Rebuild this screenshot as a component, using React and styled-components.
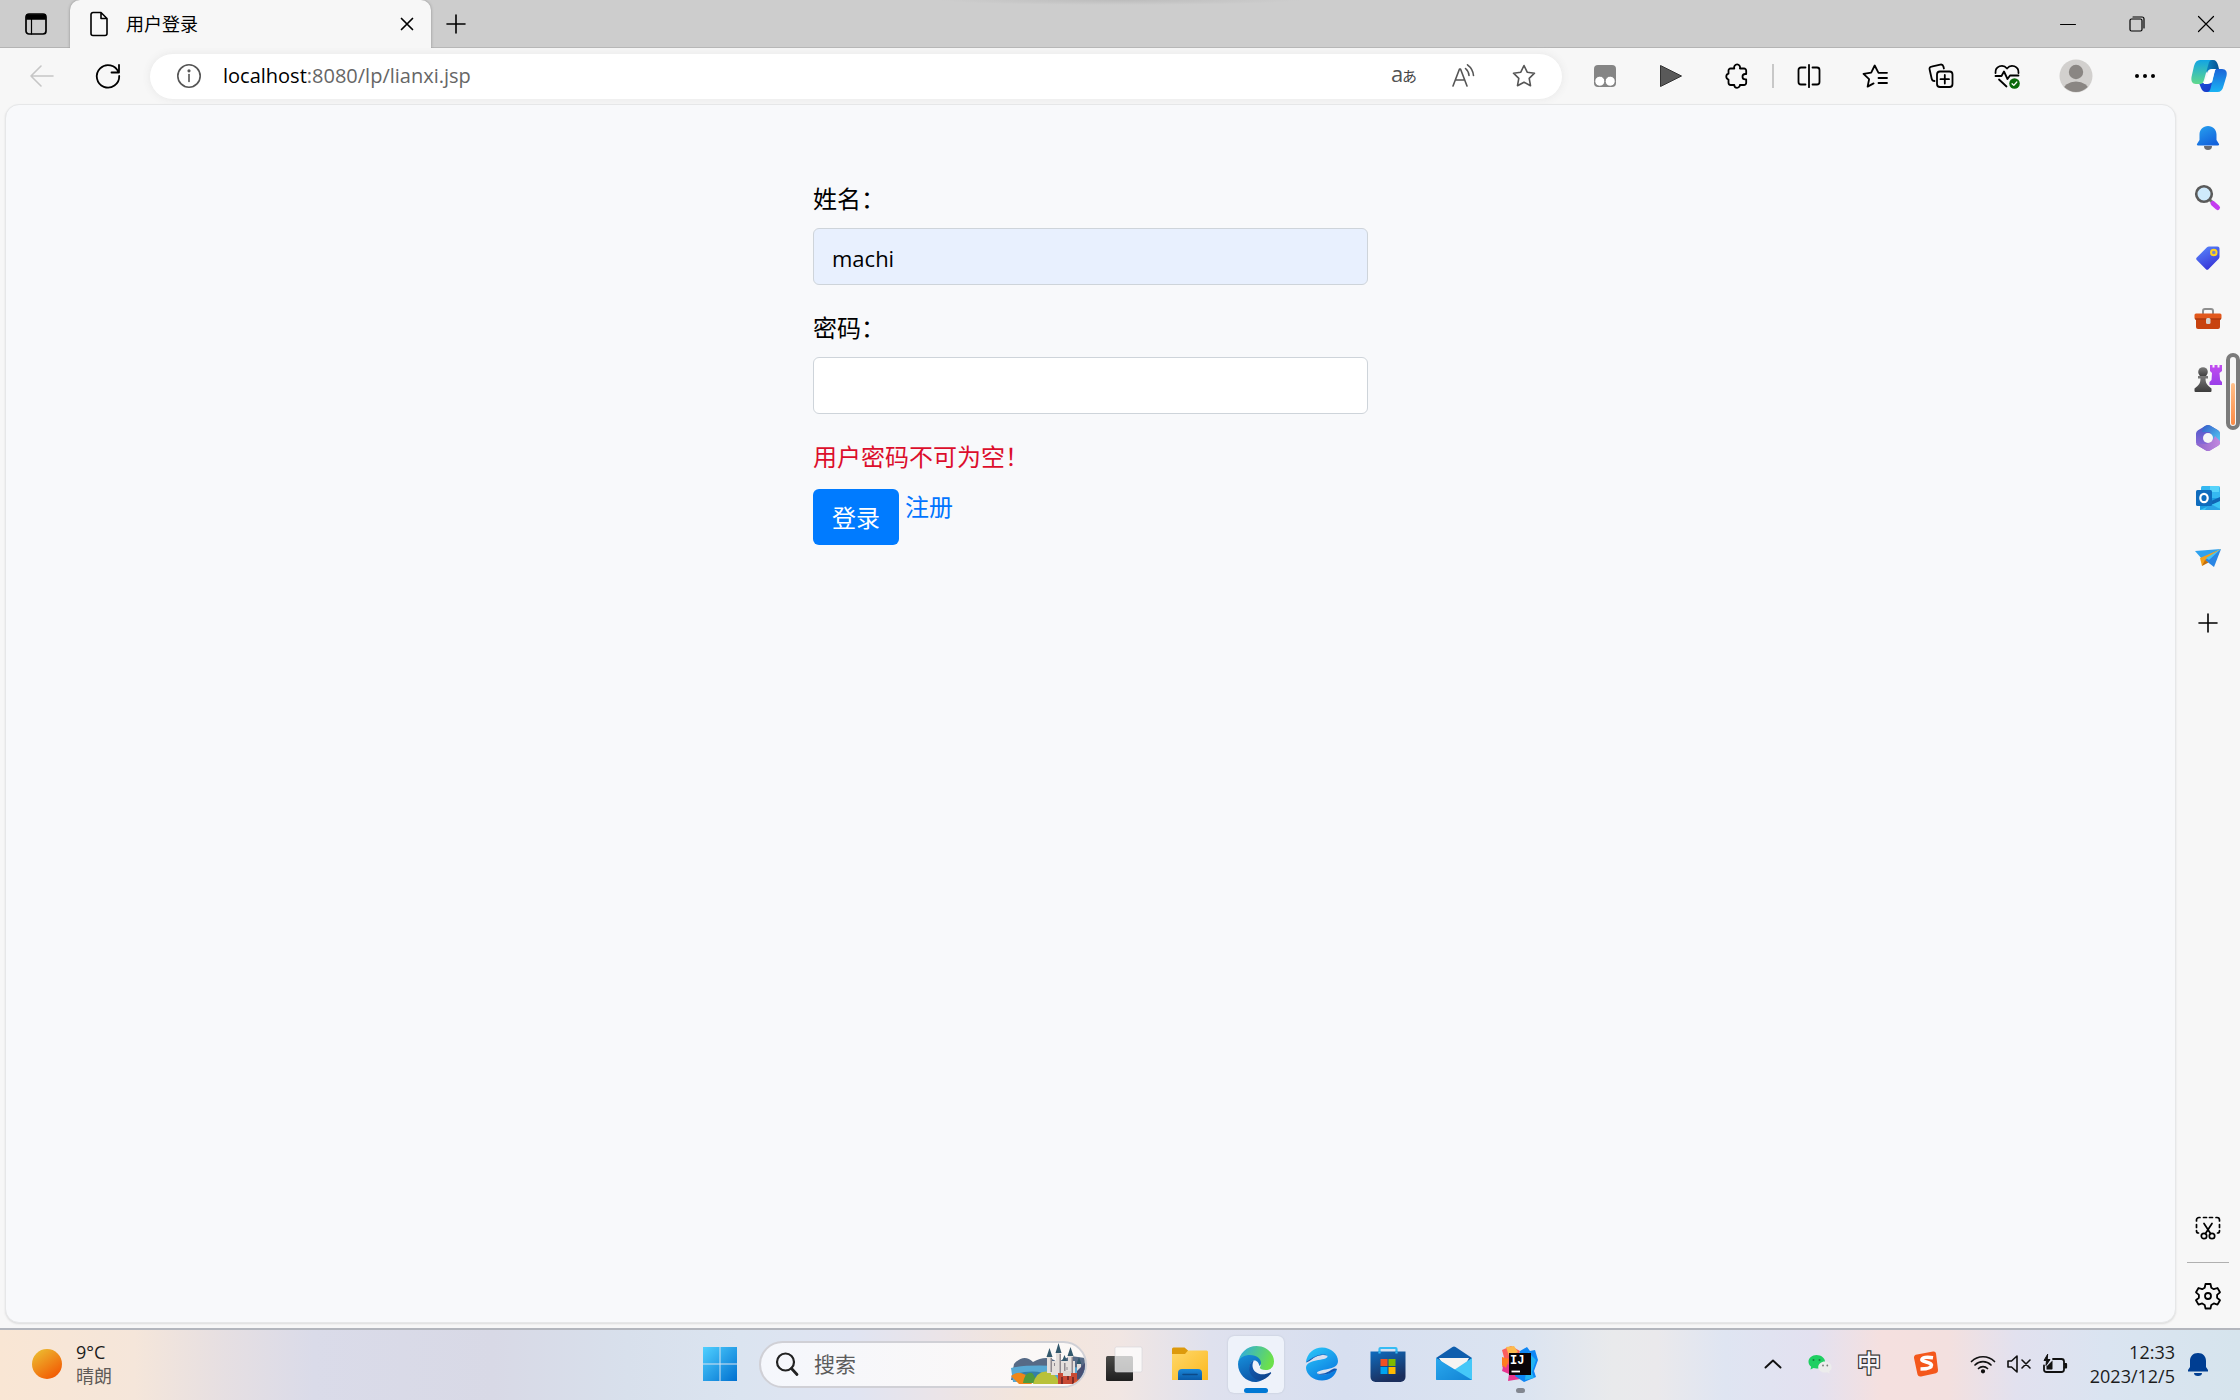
import React from 'react';
import styled, { createGlobalStyle, css } from 'styled-components';

const GlobalStyle = createGlobalStyle`
  *, *::before, *::after { box-sizing: border-box; }
  body {
    margin: 0;
    background: #f7f7f7;
    color: #000;
    font-family: "Open Sans", "Noto Sans CJK SC", sans-serif;
  }
  button, input { font: inherit; color: inherit; }
`;

const Desktop = styled.div`
  min-height: 100vh;
  display: flex;
  flex-direction: column;
`;

const iconButton = css`
  display: flex;
  align-items: center;
  justify-content: center;
  flex: none;
  padding: 0;
  border: 0;
  background: none;
`;

/* ---------- title bar ---------- */

const TitleBar = styled.header`
  display: flex;
  height: 48px;
  background: radial-gradient(ellipse 180px 5px at 50% 0, #bcbcbc, #cdcdcd);
  box-shadow: inset 0 -1px 0 #b4b4b4;
`;

const TabActions = styled.button`
  ${iconButton}
  width: 70px;
  padding-left: 2px;
`;

const Tab = styled.div`
  display: flex;
  align-items: center;
  width: 361px;
  height: 48px;
  padding: 0 11px 0 19px;
  gap: 17px;
  border-radius: 10px 10px 0 0;
  background: #f7f7f7;
  box-shadow: 0 0 3px #8d8d8d;
  clip-path: inset(0 -4px 0 -4px);
`;

const TabTitle = styled.span`
  flex: 1;
  font-size: 18px;
  line-height: 24px;
`;

const SmallButton = styled.button`
  ${iconButton}
  width: 26px;
  height: 26px;
`;

const NewTab = styled.button`
  ${iconButton}
  width: 50px;
`;

const WindowControls = styled.div`
  display: flex;
  margin-left: auto;
`;

const WindowButton = styled.button`
  ${iconButton}
  width: 69px;
`;

/* ---------- toolbar ---------- */

const Toolbar = styled.nav`
  display: flex;
  align-items: center;
  height: 56px;
  padding-left: 9px;
`;

const ToolButton = styled.button`
  ${iconButton}
  width: ${(p) => p.$width || 66}px;
  height: 48px;
`;

const AddressBar = styled.div`
  display: flex;
  align-items: center;
  flex: 1;
  height: 45px;
  margin: 0 10px 0 9px;
  padding: 0 8px 0 26px;
  border-radius: 23px;
  background: #fff;
  box-shadow: 0 0 8px #e6e6e6;
`;

const Url = styled.div`
  flex: 1;
  margin-left: 21px;
  font-size: 20px;
  line-height: 28px;
  color: #666;
  b { font-weight: 400; color: #000; }
`;

const ToolDivider = styled.span`
  width: 2px;
  height: 24px;
  margin: 0 2px;
  background: #c8c8c8;
`;

/* ---------- page and side bar ---------- */

const Body = styled.div`
  display: flex;
  flex: 1;
`;

const Page = styled.main`
  flex: 1;
  margin: 0 0 5px 5px;
  padding-top: 76px;
  border: 1px solid #e6e7e8;
  border-radius: 14px;
  background: #f8f9fb;
  box-shadow: 0 1px 2px #dcdcdc;
`;

const LoginForm = styled.form`
  width: 555px;
  margin: 0 auto;
  font-size: 24px;
  line-height: 36px;
`;

const Field = styled.div`
  display: flex;
  flex-direction: column;
  gap: 11px;
  margin-bottom: 25px;
`;

const TextInput = styled.input`
  width: 100%;
  height: 57px;
  padding: 2px 18px 0;
  border: 1px solid #ced4da;
  border-radius: 6px;
  background: ${(p) => (p.$filled ? '#e8f0fe' : '#fff')};
  font-size: 22px;
  outline: 0;
`;

const ErrorText = styled.p`
  margin: 0 0 14px;
  color: #dc0e2c;
`;

const Actions = styled.div`
  display: flex;
  align-items: flex-start;
  gap: 6px;
`;

const SubmitButton = styled.button`
  height: 56px;
  padding: 2px 19px 0;
  border: 0;
  border-radius: 6px;
  background: #007bff;
  color: #fff;
`;

const RegisterLink = styled.a`
  color: #0074ff;
  text-decoration: none;
`;

const SideBar = styled.aside`
  position: relative;
  display: flex;
  flex-direction: column;
  align-items: center;
  width: 64px;
  padding: 4px 0 2px;
`;

const SideButton = styled.button`
  ${iconButton}
  width: 60px;
  height: 60px;
`;

const SideSpacer = styled.span`
  flex: ${(p) => (p.$size ? 'none' : 1)};
  height: ${(p) => p.$size || 0}px;
`;

const SideDivider = styled.hr`
  width: 42px;
  height: 1px;
  margin: 4px 0 3px;
  border: 0;
  background: #b0b0b0;
`;

const Meter = styled.div`
  position: absolute;
  right: 0;
  top: 249px;
  display: flex;
  align-items: flex-end;
  width: 14px;
  height: 77px;
  padding: 1px;
  border: 4px solid #7b7b7b;
  border-radius: 7px;
  background: #f7f7f7;
`;

const MeterFill = styled.span`
  width: 100%;
  height: 42px;
  border-radius: 2px;
  background: linear-gradient(#ffc08a, #fb8a45);
`;

/* ---------- task bar ---------- */

const TaskBar = styled.footer`
  display: grid;
  grid-template-columns: 1fr auto 1fr;
  height: 72px;
  padding-bottom: 2px;
  border-top: 2px solid #b3b6bd;
  background: linear-gradient(90deg,
    #f9e6d4 0%, #f5e6da 6%, #e6dfe2 10%, #dadbe9 14%, #d8d9e6 22%, #d8e0ec 28%, #dbe4f0 33%, #e0e4f2 38%,
    #ebe4e8 42%, #f4e5da 46%, #f1e6e3 50%, #dfe1ee 54%, #d7dff0 60%, #dbe4f1 68%, #e9eaec 72%, #eae9ec 74%,
    #dfe5f2 77%, #e3e1f0 81%, #f5e0df 84%, #f3e0df 87%, #e2e1ef 90%, #dae4f1 94%, #d6e4ed 100%);
`;

const Weather = styled.div`
  display: flex;
  align-items: center;
  gap: 14px;
  padding-left: 32px;
`;

const WeatherText = styled.div`
  font-size: 18px;
  line-height: 24px;
  color: #1c1c1c;
  span { display: block; color: #5f5b57; }
`;

const Apps = styled.div`
  display: flex;
  align-items: center;
`;

const AppButton = styled.button`
  ${iconButton}
  position: relative;
  width: 66px;
  height: 68px;
`;

const ActiveTile = styled.span`
  display: flex;
  align-items: center;
  justify-content: center;
  width: 56px;
  height: 57px;
  border-radius: 6px;
  background: #eef2fa;
  box-shadow: 0 0 2px #b9c0cf;
`;

const Indicator = styled.span`
  position: absolute;
  bottom: 5px;
  width: ${(p) => (p.$active ? 24 : 9)}px;
  height: 5px;
  border-radius: 3px;
  background: ${(p) => (p.$active ? '#0078d4' : '#828790')};
`;

const SearchBox = styled.label`
  display: flex;
  align-items: center;
  width: 328px;
  height: 47px;
  margin: 0 4px 0 6px;
  padding-left: 14px;
  gap: 15px;
  overflow: hidden;
  border: 2px solid #d0d0d6;
  border-radius: 24px;
  background: linear-gradient(90deg, #f5f7fc, #fcf8f6);
`;

const SearchInput = styled.input`
  flex: 1;
  min-width: 0;
  padding: 0;
  border: 0;
  outline: 0;
  background: none;
  font-size: 21px;
  &::placeholder { color: #5c5c5c; opacity: 1; }
`;

const Tray = styled.div`
  display: flex;
  align-items: center;
  justify-content: flex-end;
  padding-right: 20px;
`;

const TrayButton = styled.button`
  ${iconButton}
  width: ${(p) => p.$width}px;
  height: 48px;
`;

const Clock = styled.time`
  margin: 0 0 0 10px;
  width: 92px;
  font-size: 18px;
  line-height: 24px;
  text-align: right;
  color: #1c1c1c;
  span { display: block; }
`;

/* ---------- drawings ---------- */

const Drawing = styled.svg`
  flex: none;
  overflow: visible;
`;

const Glyph = ({ w = 24, h = w, color = '#000', sw = 1.6, children }) => (
  <Drawing width={w} height={h} viewBox={`0 0 ${w} ${h}`} fill="none" stroke={color} strokeWidth={sw}
    strokeLinecap="round" strokeLinejoin="round" aria-hidden="true">{children}</Drawing>
);
const Art = ({ w = 24, h = w, children }) => (
  <Drawing width={w} height={h} viewBox={`0 0 ${w} ${h}`} aria-hidden="true">{children}</Drawing>
);
const Grad = ({ id, from, to, x2 = 1, y2 = 1 }) => (
  <linearGradient id={id} x1="0" y1="0" x2={x2} y2={y2}>
    <stop offset="0" stopColor={from} /><stop offset="1" stopColor={to} />
  </linearGradient>
);

const STAR = 'M12 1.500l3.200 6.700 7.300 1-5.300 5.100 1.300 7.400-6.500-3.500-6.500 3.500 1.300-7.400L1.500 9.200l7.300-1z';

const TabActionsIcon = () => (
  <Glyph w={22} sw={1.7}>
    <rect x="1" y="1" width="20" height="20" rx="3" />
    <path d="M2 2h18v4H2z" fill="#000" /><path d="M6.500 6v15" strokeWidth="1.200" />
  </Glyph>
);
const FileIcon = () => (
  <Glyph w={20} h={26}><path d="M4 1.500h8l6 6v15a2 2 0 0 1-2 2H4a2 2 0 0 1-2-2v-19a2 2 0 0 1 2-2zM12 2v5.500h6" /></Glyph>
);
const BackIcon = () => <Glyph color="#c6c6c6"><path d="M23 12H1M11 2L1 12l10 10" /></Glyph>;
const RefreshIcon = () => (
  <Glyph w={26} sw={1.8}><path d="M23.500 9.500A11.200 11.200 0 1 0 24.200 13M24 2v7.500h-7.500" /></Glyph>
);
const InfoIcon = () => (
  <Glyph w={26} color="#555"><circle cx="13" cy="13" r="11.200" /><path d="M13 11.500v7" />
    <circle cx="13" cy="7.800" r=".8" fill="#555" /></Glyph>
);
const TranslateIcon = () => (
  <Art w={28} h={28}>
    <text x="1" y="20" fontSize="22" fill="#555">a</text>
    <text x="12" y="20" fontSize="15" fill="#444" fontFamily="Noto Sans CJK JP, sans-serif">あ</text>
  </Art>
);
const ReadAloudIcon = () => (
  <Glyph w={26} color="#555">
    <path d="M2 23L8.500 6h1L16 23M4.500 17h9M14.500 5.500a10 10 0 0 1 3.500 7M16.500 1.800a15 15 0 0 1 6 10.700" />
  </Glyph>
);
const StarIcon = () => <Glyph color="#555"><path d={STAR} /></Glyph>;
const MonkeyIcon = () => (
  <Art w={24}><rect x="1" y="1" width="22" height="22" rx="4" fill="#858585" />
    <circle cx="6.800" cy="17.200" r="5" fill="#fff" stroke="#777" strokeWidth=".8" />
    <circle cx="17.200" cy="17.200" r="5" fill="#fff" stroke="#777" strokeWidth=".8" /></Art>
);
const PlayIcon = () => (
  <Art w={24}><path d="M1.500 1.500v21l21-10.500z" fill="#595959" stroke="#333" strokeWidth="1" /></Art>
);
const PuzzleIcon = () => (
  <Glyph sw={1.8}>
    <path d="M5.500 4.500H9.300a3 3 0 1 1 5.600 0H19a2.200 2.200 0 0 1 2.200 2.200V10h-1a2.700 2.700 0 0 0 0 5.400h1v3.400A2.200 2.200 0 0 1 19 21h-4.100a2.800 2.800 0 1 1-5.600 0H5.700a2.200 2.200 0 0 1-2.200-2.200v-3.300a3 3 0 0 1 0-5.800V6.500a2 2 0 0 1 2-2z" />
  </Glyph>
);
const SplitIcon = () => (
  <Glyph sw={1.8}><path d="M8.500 3.500H4A2.500 2.500 0 0 0 1.500 6v12A2.500 2.500 0 0 0 4 20.500h4.500M15.500 3.500H20A2.500 2.500 0 0 1 22.500 6v12a2.500 2.500 0 0 1-2.500 2.500h-4.500M12 .8v22.400" /></Glyph>
);
const FavoritesIcon = () => (
  <Glyph w={26} h={24} sw={1.8}>
    <path d="M25 8.800h-8.500L12.700 1.500 9.200 8.700l-7.700 1.200 5.600 5.300-1.500 7.400 6-3.200M16.500 14H25M16.500 19H25" />
  </Glyph>
);
const CollectionsIcon = () => (
  <Glyph w={26} sw={1.8}>
    <path d="M6.500 18c-1.500 0-2.500-1-2.800-2.300L1.600 6.500C1.200 5 2 3.900 3.500 3.600l8.800-2c1.600-.3 2.700.4 3.100 1.900l.5 2" />
    <rect x="9" y="8.500" width="15.500" height="15.500" rx="3" /><path d="M16.800 12v8.500M12.500 16.200H21" />
  </Glyph>
);
const HealthIcon = () => (
  <Glyph w={26} sw={1.8}>
    <path d="M1.500 10C1 3 9 .5 13 5.500 17 .5 25 3 24.500 10M1.500 13h6l2.500-4.500 3.500 7.500 2.500-3.500h8.500M5 16.500l7.500 7" />
    <circle cx="20.500" cy="20.500" r="5.300" fill="#0b6a0b" stroke="none" />
    <path d="M18.100 20.700l1.700 1.700 3-3.400" stroke="#fff" strokeWidth="1.300" />
  </Glyph>
);
const Avatar = () => (
  <Art w={34}>
    <clipPath id="avatarClip"><circle cx="17" cy="17" r="16" /></clipPath>
    <circle cx="17" cy="17" r="16.500" fill="#d2d0ce" />
    <circle cx="17" cy="13" r="7.200" fill="#8a8683" />
    <ellipse cx="17" cy="32" rx="13" ry="9.500" fill="#8a8683" clipPath="url(#avatarClip)" />
  </Art>
);
const DotsIcon = () => (
  <Art w={22} h={6}>{[3, 11, 19].map((x) => <circle key={x} cx={x} cy="3" r="2" />)}</Art>
);
const CopilotIcon = () => (
  <Art w={38} h={34}>
    <defs>
      <Grad id="cp1" from="#12a4e4" to="#61d98c" x2={0} /><Grad id="cp2" from="#1b64d8" to="#1ab4f4" x2={0} />
      <Grad id="cp3" from="#0f9fe0" to="#06508f" x2={1} y2={0} /><Grad id="cp4" from="#1f4fd8" to="#1436c4" />
    </defs>
    <path d="M10 1h13c3 0 4 2 5 5l1 4h-7c-3 0-4 1-5 4z" fill="url(#cp3)" />
    <path d="M9 24h8l10-1-2 6c-1 3-2 4-5 4h-4c-3 0-4-2-5-4z" fill="url(#cp4)" />
    <path d="M10 1h12c-2 0-3 2-3.500 4L14 21c-1 3-2 4-4 4H6c-4 0-5-3-4.500-7L4 7c1-4 3-6 6-6z" fill="url(#cp1)" />
    <path d="M26 10h6c4 0 5.500 3 4.500 7l-3 10c-1 4-3 6-6 6H17c2 0 3-1.500 3.500-3.500l4-16c.6-2.200 1-3.500 1.500-3.500z" fill="url(#cp2)" />
    <path d="M19.500 11.500c1-1 2-1.500 4-1.500h2.500c-1 .5-1.300 1.500-1.600 3l-2.400 9.500c-1 1.500-2 2.500-4.500 2.500H14c-1 0 0-1 .5-2z" fill="#fff" />
  </Art>
);

const BellArt = () => (
  <Art w={24} h={26}>
    <Grad id="bell" from="#27a3f0" to="#1463dc" x2={0.6} />
    <path d="M8 21h8a4 4 0 0 1-8 0z" fill="#6b6b70" />
    <path d="M12 1c-5 0-8.500 4-8.500 8.500V15L1 19c-.3.700 0 1.500 1 1.500h20c1 0 1.300-.8 1-1.500l-2.500-4V9.500C20.500 5 17 1 12 1z" fill="url(#bell)" />
  </Art>
);
const SearchArt = () => (
  <Art w={28} h={28}>
    <path d="M16 16l4 4" stroke="#777" strokeWidth="3" />
    <path d="M19 19.500l4.500 4" stroke="#c43cf0" strokeWidth="5" strokeLinecap="round" />
    <circle cx="10" cy="10" r="7.800" fill="#cfeafc" stroke="#5a5a5a" strokeWidth="2.600" />
  </Art>
);
const TagArt = () => (
  <Art w={26}>
    <Grad id="tag" from="#5a8cff" to="#3937d8" x2={0.5} />
    <path d="M14 1.500h8.500a2 2 0 0 1 2 2V12a3 3 0 0 1-1 2L13.700 24a2 2 0 0 1-3 0L2 15.300a2 2 0 0 1 0-3L12 2.300a3 3 0 0 1 2-.8z" fill="url(#tag)" />
    <circle cx="18.800" cy="7.500" r="2.800" fill="#7b86c8" stroke="#ffd21e" strokeWidth="2" />
  </Art>
);
const ToolboxArt = () => (
  <Art w={28} h={24}>
    <path d="M9 8V5a2 2 0 0 1 2-2h6a2 2 0 0 1 2 2v3" fill="none" stroke="#8f8f8f" strokeWidth="2" />
    <rect x="2" y="11" width="24" height="12" rx="2" fill="#c8430f" />
    <path d="M2 7.500h24a1.500 1.500 0 0 1 1.500 1.500v3c0 1-1 1.500-2 1.500h-23c-1 0-2-.5-2-1.500V9A1.500 1.500 0 0 1 2 7.500z" fill="#e2581c" />
    <path d="M1 13h26" stroke="#8f2a0a" strokeWidth="1" /><rect x="12" y="12" width="4.500" height="6" rx="1.500" fill="#d8d4d0" />
  </Art>
);
const ChessArt = () => (
  <Art w={28} h={28}>
    <Grad id="pawn" from="#7a7a7a" to="#3c3c3c" x2={0} /><Grad id="rook" from="#c24cf0" to="#9a3fe8" x2={0} />
    <path d="M16 1h2.500v2.500h2V1h3v2.500h2V1H28v6l-2.500 2 .6 7 1.900 2v3H15.500v-3l2-2 .5-7-2-2z" fill="url(#rook)" />
    <circle cx="9" cy="8" r="4.800" fill="url(#pawn)" />
    <path d="M4 12h10v2.500h-2.500c0 4 1 5.500 3 7.500l3 2.500V27a1 1 0 0 1-1 1H1.500a1 1 0 0 1-1-1v-2.500l3-2.500c2-2 3-3.500 3-7.500H4z" fill="url(#pawn)" />
  </Art>
);
const M365Art = () => (
  <Art w={26} h={28}>
    <defs>
      <Grad id="m1" from="#4458c8" to="#a66fdc" x2={0} /><Grad id="m2" from="#3358c8" to="#55d4f6" x2={1} />
      <Grad id="m3" from="#8a63c8" to="#c58ae0" x2={1} y2={0} />
      <clipPath id="hexClip"><path d="M11 1.600a4 4 0 0 1 4 0l8 4.600a4 4 0 0 1 2 3.400v8.800a4 4 0 0 1-2 3.400l-8 4.600a4 4 0 0 1-4 0l-8-4.600a4 4 0 0 1-2-3.400V9.600a4 4 0 0 1 2-3.400z" /></clipPath>
    </defs>
    <g clipPath="url(#hexClip)">
      <path d="M0 0h26v28H0z" fill="url(#m1)" />
      <path d="M9 0h17v19l-8-4-3-7H7z" fill="url(#m2)" />
      <path d="M0 20h12l6-4 2-4 6 6v10H0z" fill="url(#m3)" />
    </g>
    <circle cx="13" cy="14" r="5" fill="#f7f7f7" />
  </Art>
);
const OutlookArt = () => (
  <Art w={26}>
    <rect x="6" y="1" width="19" height="13" rx="1.500" fill="#35b8f1" /><path d="M15 1h9v6h-9z" fill="#57d3fa" />
    <path d="M5 13h20v10a2 2 0 0 1-2 2H5z" fill="#1b9de2" /><path d="M25 12v12L14 17z" fill="#1066b5" />
    <path d="M5 25l20-9v7a2 2 0 0 1-2 2z" fill="#3cc5f5" /><path d="M14 18l11 6v1H10z" fill="#2aa4e6" />
    <rect x="1" y="5" width="16" height="16" rx="1.500" fill="#0f6cbd" />
    <ellipse cx="9" cy="13" rx="3.700" ry="4.200" fill="none" stroke="#fff" strokeWidth="2.200" />
  </Art>
);
const SendArt = () => (
  <Art w={28} h={22}>
    <path d="M27 2L1 4l7 8z" fill="#2fa2ee" /><path d="M27 2L6 11l2 8z" fill="#f5a11a" />
    <path d="M27 2l-7 18-9-7z" fill="#2a86e4" /><path d="M8 19l3-6 3.500 2.500z" fill="#c5700d" />
    <path d="M27 2L12 11l3 2z" fill="#46c3f2" />
  </Art>
);
const PlusIcon = () => <Glyph w={20} sw={1.6}><path d="M10 1v18M1 10h18" /></Glyph>;
const SnipIcon = () => (
  <Glyph w={26} h={24} sw={1.7}>
    <path d="M1.500 5V4a2.500 2.500 0 0 1 2.500-2.500h1M8.500 1.500h3M14.500 1.500h3M21 1.500h1A2.500 2.500 0 0 1 24.500 4v1M1.500 8.500v3M24.500 8.500v3M1.500 14.500V15A2 2 0 0 0 3.500 17M24.500 14.500V15a2 2 0 0 1-2 2M9 7.500l6.500 10M17 7.500l-6.500 10" />
    <circle cx="9" cy="20" r="2.700" /><circle cx="17" cy="20" r="2.700" />
  </Glyph>
);
const GearIcon = () => (
  <Glyph w={28} sw={1.8}>
    <circle cx="14" cy="14" r="3" />
    <path d="M11.500 2h5l.8 3.800 2.500 1.400 3.700-1.200 2.500 4.300-2.900 2.600v2.900l2.900 2.500-2.500 4.300-3.700-1.200-2.500 1.500-.8 3.600h-5l-.8-3.600-2.500-1.500-3.700 1.200L2 18.300l2.900-2.500v-2.900L2 10.300 4.500 6l3.700 1.200 2.500-1.400z" />
  </Glyph>
);

const StartArt = () => (
  <Art w={36}>
    <Grad id="win" from="#50d0ff" to="#0070d0" />
    <path d="M1 1h16.500v16.500H1zM18.500 1H35v16.500H18.500zM1 18.500h16.500V35H1zM18.500 18.500H35V35H18.500z" fill="url(#win)" />
  </Art>
);
const CastleArt = () => (
  <Art w={74} h={43}>
    <path d="M3 21q10-11 19-2 14-8 24 0l14-6 14 2v22H0z" fill="#566a86" />
    <path d="M0 25q20-5 74 0v14H2z" fill="#58a9d4" /><path d="M4 31q22-6 36 2l-4 7H8z" fill="#347fa8" />
    <path d="M0 33q10-8 18 3l3 5H8z" fill="#ef8618" /><path d="M12 40q2-12 9-10 3 3 5 10z" fill="#4f9a3c" />
    <path d="M22 41q4-15 17-12 9 5 9 12z" fill="#b9c13a" />
    <path d="M36 14h5v16h-5zM45 10h5v20h-5zM57 13h5v20h-5zM40 18h24v14H40zM66 21h4v13h-4z" fill="#e5dfdc" />
    <path d="M35.500 14l3-9 3 9zM44.500 10l3-10 3 10zM56.500 13l3-9 3 9zM65.500 21l2.500-7 2.500 7zM51 18l2.500-6 2.500 6z" fill="#33586c" />
    <path d="M39.500 15h1.500v14h-1.500zM48.500 11h1.500v19h-1.500zM60.500 14h1.500v18h-1.500zM43 20h1v3h-1zM53 20h1.500v10H53zM55.500 24h1v3h-1z" fill="#8f898f" />
    <path d="M47 30h19v11H47z" fill="#c94a34" /><path d="M50 34h2v7h-2zM56 32h2v5h-2zM61 34h2v7h-2z" fill="#7d2b25" />
    <path d="M52 28h8v5h-8z" fill="#ddd5d0" />
    <path d="M66 41V28l8-8v21z" fill="#485074" /><path d="M62 41q5-7 12-6v6z" fill="#e4672f" />
  </Art>
);
const TaskViewArt = () => (
  <Art w={36}>
    <Grad id="tv" from="#4a4a48" to="#1f1f1f" x2={0} />
    <rect x="0" y="10" width="27" height="25" rx="1.500" fill="url(#tv)" />
    <rect x="9" y="1" width="27" height="25" rx="1.500" fill="#fff" fillOpacity=".72" stroke="#d4d4d8" strokeWidth=".6" />
  </Art>
);
const FolderArt = () => (
  <Art w={36}>
    <Grad id="fold" from="#ffd869" to="#fbb820" /><Grad id="foldb" from="#1b87d8" to="#0a5aa8" x2={0} />
    <path d="M0 3a1.500 1.500 0 0 1 1.500-1.500h11L16 4.500V9H0z" fill="#dd9a0c" />
    <path d="M0 8h13l3-3.500h18.500A1.500 1.500 0 0 1 36 6v28H0z" fill="url(#fold)" />
    <path d="M6 34V27a4 4 0 0 1 4-4h16a4 4 0 0 1 4 4v7z" fill="url(#foldb)" />
    <path d="M11 28.500h14" stroke="#0c4a88" strokeWidth="1.600" strokeLinecap="round" />
  </Art>
);
const EdgeArt = () => (
  <Art w={36}>
    <defs>
      <Grad id="e1" from="#2aa6ee" to="#6be04c" x2={1} y2={0.3} /><Grad id="e2" from="#1790dc" to="#0c56a8" x2={0.4} />
      <Grad id="e3" from="#1160b8" to="#0e3f86" x2={1} />
    </defs>
    <path d="M0 18C1 7 9 0 18.500 0 28 0 36 7 36 15.500c0 6-4 8.500-8.500 8.500-4 0-6.200-1.500-5.500-3 2-3 0-9-7-10C8 10 1 13 0 18z" fill="url(#e1)" />
    <path d="M0 18C.5 11 7 9 12 9c7 0 11 4 11 8 0 2-1.500 3-1.500 3-1-5-4-6-6-5.500-4 1.500-5 8-2 12.500 3 5 9 6 14 4.500C24 35 20 36 17.500 36 8 36 0 28 0 18z" fill="url(#e2)" />
    <path d="M16 14.300C10 16 9 27 16 32c5 3.500 11 3 17-4.500.5-1-.3-1.500-1-1-8 4-17 1-17.500-6.500 0-3 .8-4.500 1.500-5.700z" fill="url(#e3)" />
  </Art>
);
const LegacyEdgeArt = () => (
  <Art w={34}>
    <Grad id="ie" from="#2ccafa" to="#0b7be0" x2={0.6} />
    <path d="M.8 15.500C2 6 9 .5 17 .5c9 0 16 6.500 16 13.500 0 5-4.500 7-10 8-6 1-11 2.200-11 4 0 2.500 9 3.500 20-4C30.500 29 24.500 33.500 17 33.500c-9 0-15.500-6-16-12.500 0-4.500 4.500-6.500 10-7.500 6-1 11.500-2 11.500-4C22.500 6.500 12 6.500.8 15.500z" fill="url(#ie)" />
    <path d="M.8 15.500C10 7 20 6 22.300 8.800 19 6.800 11 9 8 11.500 6 13 3 15.500.8 15.500zM32.300 22C25 28 14 29 12 26.500c4 1.500 11-1 14-3.500 2-1.500 4-2 6.300-1z" fill="#0f56b4" />
  </Art>
);
const StoreArt = () => (
  <Art w={36}>
    <Grad id="store" from="#0f6cbf" to="#1b2e5c" x2={0.4} />
    <path d="M9.500 9V3a1 1 0 0 1 1-1h15a1 1 0 0 1 1 1v6" fill="none" stroke="#35bcf4" strokeWidth="2.200" />
    <path d="M.5 5.500h35V31a5 5 0 0 1-5 5h-25a5 5 0 0 1-5-5z" fill="url(#store)" />
    <path d="M9.500 5.500V7.500M26.500 5.500V7.500" stroke="#35bcf4" strokeWidth="2.200" />
    <path d="M10.500 13h7v7h-7z" fill="#f25022" /><path d="M18.500 13h7v7h-7z" fill="#7fba00" />
    <path d="M10.500 21h7v7h-7z" fill="#00a4ef" /><path d="M18.500 21h7v7h-7z" fill="#ffb900" />
  </Art>
);
const MailArt = () => (
  <Art w={36}>
    <Grad id="mail" from="#2aa9ee" to="#1283d4" />
    <path d="M0 12L16.500 1a3 3 0 0 1 3 0L36 12v4H0z" fill="#0f5ead" /><path d="M3 12h30l-6 11H10z" fill="#f6f4f2" />
    <path d="M36 12v22H0V12l18 12z" fill="#45c8f8" /><path d="M0 12l36 22H1a1 1 0 0 1-1-1z" fill="url(#mail)" />
  </Art>
);
const IdeaArt = () => (
  <Art w={36}>
    <path d="M0 4l9-4 9 5-4 13-12 6L0 20l3-5z" fill="#fb5f5c" /><path d="M4 1l8-1 4 6-9 4z" fill="#fdb94d" />
    <path d="M2 17l8 3 8 13-12 2 1-7-7-3z" fill="#e8368f" /><path d="M0 11l7 2-3 9-4-3z" fill="#fe7d20" />
    <path d="M18 5l7-4 3 4 5-1 3 10-4 11 2 6-12 5-9-6z" fill="#0f87f5" /><path d="M26 6l8 8-4 12 2 6-9 2z" fill="#23b4f2" />
    <rect x="7" y="7" width="22" height="22" fill="#0a0408" />
    <text x="8" y="18" fontSize="12" fontWeight="700" fill="#fff" fontFamily="Liberation Mono, monospace">IJ</text>
    <path d="M9.500 25.500H18" stroke="#fff" strokeWidth="1.800" />
  </Art>
);
const WechatArt = () => (
  <Art w={24} h={20}>
    <path d="M8.500 1C4 1 .5 4 .5 7.700c0 2 1 3.700 2.600 5L2.500 15.500l3-1.400c1 .3 2 .4 3 .4 4.500 0 8.500-3 8.500-6.800S13 1 8.500 1z" fill="#1fcf62" />
    <path d="M17 7.500c-3.800 0-6.800 2.500-6.800 5.500s3 5.600 6.800 5.600c.8 0 1.500-.1 2.200-.3l2.500 1.200-.5-2.200c1.500-1 2.500-2.500 2.500-4.300 0-3-3-5.500-6.700-5.500z" fill="#ececec" />
    <circle cx="5.500" cy="6" r="1" fill="#14803c" /><circle cx="11.500" cy="6" r="1" fill="#14803c" />
    <circle cx="15" cy="11.500" r=".9" fill="#777" /><circle cx="19.300" cy="11.500" r=".9" fill="#777" />
  </Art>
);
const ImeArt = () => (
  <Art w={28}>
    <text x="14" y="22" fontSize="24" textAnchor="middle" fontWeight="500" fill="#f7f7fb" stroke="#333" strokeWidth="2.400"
      paintOrder="stroke" fontFamily="Noto Sans CJK SC, sans-serif">中</text>
  </Art>
);
const SogouArt = () => (
  <Art w={26}>
    <path d="M4 3.500l16-3a2.500 2.500 0 0 1 3 2L25 19a3 3 0 0 1-2 3.300L8 25.500a3 3 0 0 1-3.500-2L1 7a3 3 0 0 1 3-3.500z" fill="#f4581c" />
    <path d="M20 6.800c-4-.6-10-.8-11 1.500-1 2.700 9.500 2.500 9.500 5.700 0 3.500-7 4-11 4" fill="none" stroke="#fff" strokeWidth="3.600" />
  </Art>
);
const WifiIcon = () => (
  <Glyph w={26} h={20} color="#111" sw={1.7}>
    <path d="M1.500 7.500a16.300 16.300 0 0 1 23 0M5 11a11.300 11.300 0 0 1 16 0M8.500 14.500a6.300 6.300 0 0 1 9 0" />
    <circle cx="13" cy="17.300" r="1.300" fill="#111" />
  </Glyph>
);
const MuteIcon = () => (
  <Glyph w={26} h={20} color="#111"><path d="M2 7v6h3.500l5.500 5V2L5.500 7zM16 6l8 8M24 6l-8 8" /></Glyph>
);
const BatteryIcon = () => (
  <Glyph w={26} h={22} color="#111" sw={1.8}>
    <path d="M11 6h8.500A2.500 2.500 0 0 1 22 8.500v8a2.500 2.500 0 0 1-2.500 2.500h-15A2.500 2.500 0 0 1 2 16.500v-4" />
    <path d="M22.500 11h1.700v3.500h-1.700" fill="#111" />
    <path d="M4.500 16.500v-3l6-6V16l-.5.500z" fill="#111" stroke="none" />
    <path d="M5.500 1.500L2 7.500h2.500L4 12.500 8 6.500H5.500z" fill="#111" strokeWidth="1" />
  </Glyph>
);
const TrayBell = () => (
  <Art w={20} h={24}>
    <path d="M10 1c-5 0-8 3.500-8 8v6L0 18v1.500h20V18l-2-3V9c0-4.500-3-8-8-8zM6 21h8a4 3 0 0 1-8 0z" fill="#003e92" />
  </Art>
);

const TOOLS = [['拆分屏幕', SplitIcon], ['收藏夹', FavoritesIcon], ['集锦', CollectionsIcon], ['浏览器概要', HealthIcon]];
const SIDE = [['通知', BellArt], ['搜索', SearchArt], ['购物', TagArt], ['工具', ToolboxArt], ['游戏', ChessArt],
  ['Microsoft 365', M365Art], ['Outlook', OutlookArt], ['Drop', SendArt]];

export default function App() {
  return (
    <Desktop>
      <GlobalStyle />
      <TitleBar>
        <TabActions aria-label="标签页操作"><TabActionsIcon /></TabActions>
        <Tab>
          <FileIcon />
          <TabTitle>用户登录</TabTitle>
          <SmallButton aria-label="关闭标签页"><Glyph w={14} sw={1.7}><path d="M1.500 1.500l11 11M12.500 1.500l-11 11" /></Glyph></SmallButton>
        </Tab>
        <NewTab aria-label="新建标签页"><PlusIcon /></NewTab>
        <WindowControls>
          <WindowButton aria-label="最小化"><Glyph w={16} sw={1}><path d="M.5 8.500h15" /></Glyph></WindowButton>
          <WindowButton aria-label="还原">
            <Glyph w={16} sw={1.2}><rect x="1" y="3" width="12" height="12" rx="1.500" /><path d="M4 1h9a2 2 0 0 1 2 2v9" /></Glyph>
          </WindowButton>
          <WindowButton aria-label="关闭"><Glyph w={16} sw={1.2}><path d="M.5.5l15 15M15.500.5l-15 15" /></Glyph></WindowButton>
        </WindowControls>
      </TitleBar>

      <Toolbar>
        <ToolButton aria-label="后退"><BackIcon /></ToolButton>
        <ToolButton aria-label="刷新"><RefreshIcon /></ToolButton>
        <AddressBar>
          <InfoIcon />
          <Url><b>localhost</b>:8080/lp/lianxi.jsp</Url>
          <ToolButton $width={60} aria-label="翻译"><TranslateIcon /></ToolButton>
          <ToolButton $width={60} aria-label="大声朗读"><ReadAloudIcon /></ToolButton>
          <ToolButton $width={60} aria-label="收藏"><StarIcon /></ToolButton>
        </AddressBar>
        <ToolButton aria-label="篡改猴"><MonkeyIcon /></ToolButton>
        <ToolButton aria-label="播放"><PlayIcon /></ToolButton>
        <ToolButton aria-label="扩展"><PuzzleIcon /></ToolButton>
        <ToolDivider />
        {TOOLS.map(([label, Icon]) => <ToolButton key={label} aria-label={label}><Icon /></ToolButton>)}
        <ToolButton $width={72} aria-label="个人资料"><Avatar /></ToolButton>
        <ToolButton aria-label="设置及其他"><DotsIcon /></ToolButton>
        <ToolButton $width={62} aria-label="Copilot"><CopilotIcon /></ToolButton>
      </Toolbar>

      <Body>
        <Page>
          <LoginForm onSubmit={(e) => e.preventDefault()}>
            <Field>
              <label htmlFor="username">姓名：</label>
              <TextInput id="username" $filled defaultValue="machi" />
            </Field>
            <Field>
              <label htmlFor="password">密码：</label>
              <TextInput id="password" type="password" />
            </Field>
            <ErrorText role="alert">用户密码不可为空！</ErrorText>
            <Actions>
              <SubmitButton type="submit">登录</SubmitButton>
              <RegisterLink href="#register">注册</RegisterLink>
            </Actions>
          </LoginForm>
        </Page>
        <SideBar>
          {SIDE.map(([label, Icon]) => <SideButton key={label} aria-label={label}><Icon /></SideButton>)}
          <SideSpacer $size={5} />
          <SideButton aria-label="自定义"><PlusIcon /></SideButton>
          <SideSpacer />
          <SideButton aria-label="屏幕截图"><SnipIcon /></SideButton>
          <SideDivider />
          <SideButton aria-label="设置"><GearIcon /></SideButton>
          <Meter><MeterFill /></Meter>
        </SideBar>
      </Body>

      <TaskBar>
        <Weather>
          <Art w={30}><Grad id="sun" from="#ecc534" to="#f25a04" x2={0.7} /><circle cx="15" cy="15" r="15" fill="url(#sun)" /></Art>
          <WeatherText>9°C<span>晴朗</span></WeatherText>
        </Weather>
        <Apps>
          <AppButton aria-label="开始"><StartArt /></AppButton>
          <SearchBox>
            <Glyph w={24} color="#222" sw={2.2}><circle cx="10.500" cy="10" r="8.500" /><path d="M16.500 16.500l5.500 6" strokeWidth="2.800" /></Glyph>
            <SearchInput placeholder="搜索" aria-label="搜索" />
            <CastleArt />
          </SearchBox>
          <AppButton aria-label="任务视图"><TaskViewArt /></AppButton>
          <AppButton aria-label="文件资源管理器"><FolderArt /></AppButton>
          <AppButton aria-label="Microsoft Edge"><ActiveTile><EdgeArt /></ActiveTile><Indicator $active /></AppButton>
          <AppButton aria-label="浏览器"><LegacyEdgeArt /></AppButton>
          <AppButton aria-label="Microsoft Store"><StoreArt /></AppButton>
          <AppButton aria-label="邮件"><MailArt /></AppButton>
          <AppButton aria-label="IntelliJ IDEA"><IdeaArt /><Indicator /></AppButton>
        </Apps>
        <Tray>
          <TrayButton $width={32} aria-label="显示隐藏的图标"><Glyph w={18} h={10} color="#111" sw={1.9}><path d="M1.500 8.500L9 1.500l7.500 7" /></Glyph></TrayButton>
          <TrayButton $width={62} aria-label="微信"><WechatArt /></TrayButton>
          <TrayButton $width={36} aria-label="输入法"><ImeArt /></TrayButton>
          <TrayButton $width={78} aria-label="搜狗输入法"><SogouArt /></TrayButton>
          <TrayButton $width={36} aria-label="网络"><WifiIcon /></TrayButton>
          <TrayButton $width={36} aria-label="音量"><MuteIcon /></TrayButton>
          <TrayButton $width={36} aria-label="电池"><BatteryIcon /></TrayButton>
          <Clock dateTime="2023-12-05T12:33">12:33<span>2023/12/5</span></Clock>
          <TrayButton $width={45} aria-label="通知"><TrayBell /></TrayButton>
        </Tray>
      </TaskBar>
    </Desktop>
  );
}
